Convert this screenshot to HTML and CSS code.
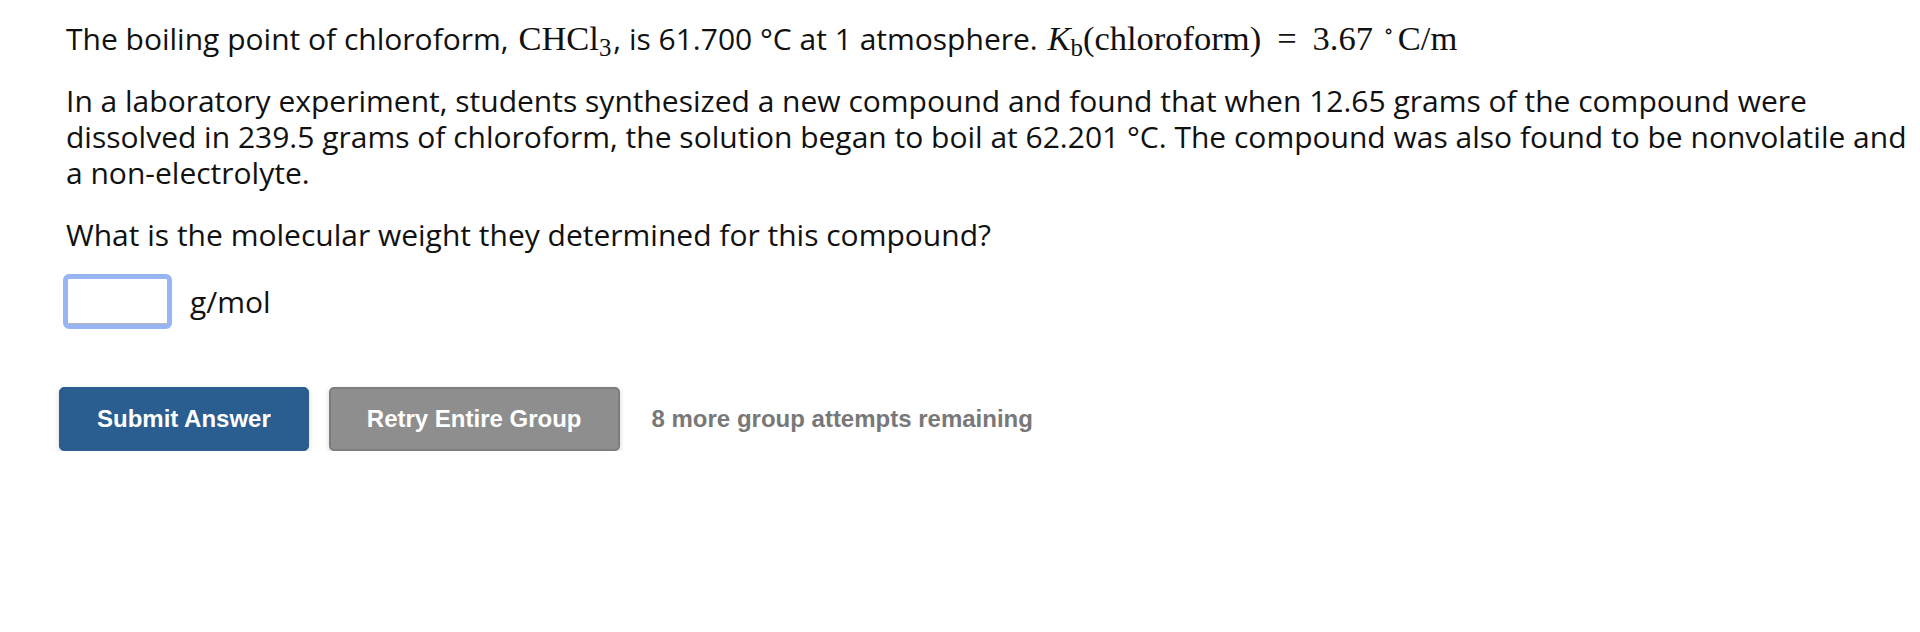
FILE: index.html
```html
<!DOCTYPE html>
<html>
<head>
<meta charset="utf-8">
<link rel="stylesheet" href="styles.css">
</head>
<body>
<div class="question">
  <p class="para">The boiling point of chloroform, <span class="math">CHCl<sub>3</sub></span>, is 61.700 °C at 1 atmosphere. <span class="math"><i>K</i><sub>b</sub>(chloroform)<span class="eq">=</span>3.67 <sup>∘</sup>C<span class="slash">/</span>m</span></p>
  <p class="para">In a laboratory experiment, students synthesized a new compound and found that when 12.65 grams of the compound were dissolved in 239.5 grams of chloroform, the solution began to boil at 62.201 °C. The compound was also found to be nonvolatile and a non-electrolyte.</p>
  <p class="para prompt">What is the molecular weight they determined for this compound?</p>
  <div class="answer-row">
    <input class="answer" type="text">
    <span class="unit">g/mol</span>
  </div>
  <div class="actions">
    <button class="btn btn-primary">Submit Answer</button>
    <button class="btn btn-secondary">Retry Entire Group</button>
    <span class="attempts">8 more group attempts remaining</span>
  </div>
</div>
</body>
</html>
```
FILE: styles.css
```css
html, body {
  margin: 0;
  padding: 0;
  background: #ffffff;
}

.question {
  padding: 21px 9px 0 66px;
  font-family: "Open Sans", "Noto Sans", sans-serif;
  font-size: 30px;
  line-height: 36px;
  color: #111;
}

.para {
  margin: 0 0 26px 0;
}

.para.prompt {
  margin-bottom: 21px;
}

.math {
  font-family: "Liberation Serif", "DejaVu Serif", serif;
  font-size: 34.5px;
  line-height: 1;
  margin: 0 2px;
}

.math sub {
  font-size: 0.72em;
  line-height: 0;
  vertical-align: -0.25em;
}

.math sup {
  font-size: 0.6em;
  line-height: 0;
  vertical-align: 0.6em;
  margin: 0 4px 0 2px;
}

.math .eq {
  margin: 0 16px;
}

.answer-row {
  display: flex;
  align-items: center;
  margin: 0 0 0 -3px;
}

.answer {
  box-sizing: border-box;
  width: 109px;
  height: 55px;
  border: 5px solid #98b5f3;
  border-radius: 6px;
  background: #fff;
  box-shadow: inset 0 -1px 0 #b5b5b5;
  outline: none;
  padding: 0;
}

.unit {
  margin-left: 18px;
  color: #111;
}

.actions {
  display: flex;
  align-items: center;
  gap: 20px;
  margin: 58px 0 0 -7px;
}

.btn {
  height: 64px;
  padding: 0 37px;
  border-radius: 5px;
  font-family: "Liberation Sans", Arial, sans-serif;
  font-weight: bold;
  font-size: 24px;
  color: #fff;
  cursor: pointer;
  box-shadow: 0 2px 5px rgba(0, 0, 0, 0.18);
}

.btn-primary {
  background: #2a5d90;
  border: 1px solid #2a5d90;
}

.btn-secondary {
  padding: 0 36px;
  background: #8e8e8e;
  border: 2px solid #7d7d7d;
}

.attempts {
  margin-left: 12px;
  font-family: "Liberation Sans", Arial, sans-serif;
  font-weight: bold;
  font-size: 24px;
  color: #787878;
}
```
